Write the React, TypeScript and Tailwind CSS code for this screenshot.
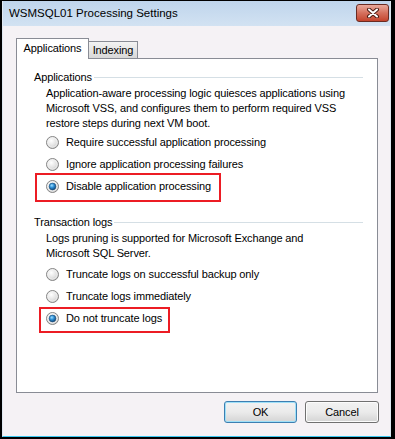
import React from "react";

function Radio({ checked }: { checked?: boolean }) {
  return (
    <svg width="13" height="13" viewBox="0 0 13 13" className="shrink-0">
      <defs>
        <radialGradient id="rg-off" cx="0.4" cy="0.35" r="0.7">
          <stop offset="0" stopColor="#ffffff" />
          <stop offset="0.6" stopColor="#e2e2e2" />
          <stop offset="1" stopColor="#bdbdbd" />
        </radialGradient>
        <radialGradient id="rg-on" cx="0.4" cy="0.35" r="0.7">
          <stop offset="0" stopColor="#9fe0ff" />
          <stop offset="0.45" stopColor="#2e8fd6" />
          <stop offset="1" stopColor="#0b3f6e" />
        </radialGradient>
      </defs>
      <circle cx="6.5" cy="6.5" r="6" fill="url(#rg-off)" stroke="#858585" strokeWidth="1" />
      <circle cx="6.5" cy="6.5" r="4.6" fill="none" stroke="#f4f4f4" strokeWidth="0.8" />
      {checked && <circle cx="6.5" cy="6.5" r="3.4" fill="url(#rg-on)" stroke="#1d4e78" strokeWidth="0.6" />}
    </svg>
  );
}

function Option({ label, checked }: { label: string; checked?: boolean }) {
  return (
    <div className="flex h-[22px] items-center gap-[7px] pl-[29px]">
      <Radio checked={checked} />
      <span>{label}</span>
    </div>
  );
}

function GroupLabel({ text }: { text: string }) {
  return (
    <div className="flex h-[15px] items-center pl-[17px] pr-[14px]">
      <span className="pr-[2px]">{text}</span>
      <div className="h-px flex-1 bg-[#d5dfe5]" />
    </div>
  );
}

export default function App() {
  return (
    <div
      className="h-[439px] w-[395px] bg-black pl-[2px] pt-px text-[11px] leading-[15px] tracking-[-0.12px] text-black"
      style={{ fontFamily: "'Liberation Sans', Arial, sans-serif" }}
    >
      <div className="flex h-[436px] w-[389px] flex-col border-b border-l border-r border-b-[#3cc8f0] border-l-[#dfe8f1] border-r-[#dfe8f1]">
        {/* title bar */}
        <div className="flex h-[25px] items-center justify-between bg-gradient-to-b from-[#bfd5ec] to-[#d2e2f2] pl-[6px] pr-px">
          <span className="text-[11.5px] tracking-[0px]">WSMSQL01 Processing Settings</span>
          <div className="mt-[-1px] flex h-[18px] w-[33px] items-center justify-center rounded-[3px] border border-[#6a2b22] bg-gradient-to-b from-[#e9a99c] via-[#d5705d] to-[#c4432c]">
            <svg width="14" height="10" viewBox="0 0 14 10">
              <path d="M3 1.5 L11 8.5 M11 1.5 L3 8.5" stroke="#4a1c14" strokeWidth="4" strokeLinecap="round" />
              <path d="M3 1.5 L11 8.5 M11 1.5 L3 8.5" stroke="#ffffff" strokeWidth="2" strokeLinecap="round" />
            </svg>
          </div>
        </div>

        {/* body */}
        <div className="flex flex-1 flex-col bg-[#f5f2f5] pl-[13px] pt-[12px]">
          <div className="flex h-[20px] items-end">
            <div className="relative z-10 -mb-px flex h-[21px] w-[73px] items-center justify-center border border-b-0 border-[#898c95] bg-white pb-[2px]">
              Applications
            </div>
            <div className="flex h-[17px] w-[49px] items-center justify-center border-r border-t border-[#898c95] bg-gradient-to-b from-[#f3f3f3] to-[#d8d8d8]">
              Indexing
            </div>
          </div>

          <div className="flex h-[335px] w-[362px] flex-col border border-[#898c95] bg-white pt-[11px]">
            <GroupLabel text="Applications" />
            <div className="mt-px pl-[29px]">
              <div>Application-aware processing logic quiesces applications using</div>
              <div>Microsoft VSS, and configures them to perform required VSS</div>
              <div>restore steps during next VM boot.</div>
            </div>
            <Option label="Require successful application processing" />
            <Option label="Ignore application processing failures" />
            <div className="relative">
              <Option label="Disable application processing" checked />
              <div className="absolute left-[18px] top-[-2px] h-[29px] w-[186px] border-2 border-[#ec1c24]" />
            </div>

            <div className="mt-[18px]">
              <GroupLabel text="Transaction logs" />
            </div>
            <div className="mt-px pl-[29px]">
              <div>Logs pruning is supported for Microsoft Exchange and</div>
              <div>Microsoft SQL Server.</div>
            </div>
            <div className="mt-[2px]">
              <Option label="Truncate logs on successful backup only" />
              <Option label="Truncate logs immediately" />
              <div className="relative">
                <Option label="Do not truncate logs" checked />
                <div className="absolute left-[22px] top-0 h-[26px] w-[131px] border-2 border-[#ec1c24]" />
              </div>
            </div>
          </div>

          <div className="mt-[8px] flex w-[362px] justify-end gap-[8px] pr-0">
            <button className="h-[22px] w-[73px] rounded-[3px] border border-[#3c7fb1] bg-gradient-to-b from-[#f2f2f2] via-[#ebebeb] to-[#d4d4d4] shadow-[inset_0_0_0_1px_#9fe0f8]">
              OK
            </button>
            <button className="mr-[-1px] h-[22px] w-[74px] rounded-[3px] border border-[#707070] bg-gradient-to-b from-[#f2f2f2] via-[#ebebeb] to-[#d4d4d4] shadow-[inset_0_0_0_1px_#fcfcfc]">
              Cancel
            </button>
          </div>
        </div>
      </div>
    </div>
  );
}
